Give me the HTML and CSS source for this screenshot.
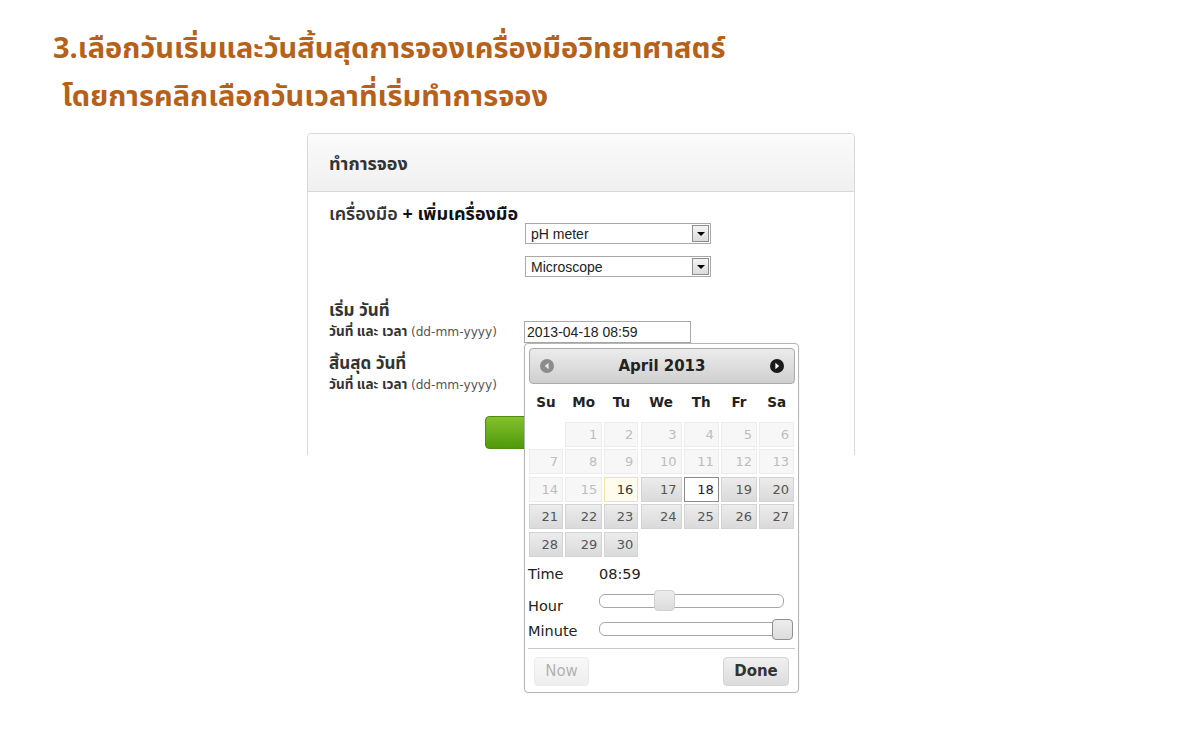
FILE: index.html
```html
<!DOCTYPE html>
<html lang="th">
<head>
<meta charset="utf-8">
<title>ทำการจอง</title>
<link rel="stylesheet" href="styles.css">
</head>
<body>
<div class="page">
  <h1 class="title">
    <span class="line">3.เลือกวันเริ่มและวันสิ้นสุดการจองเครื่องมือวิทยาศาสตร์</span>
    <span class="line line2">โดยการคลิกเลือกวันเวลาที่เริ่มทำการจอง</span>
  </h1>
  <div class="stage">
    <div class="panel-clip">
      <div class="panel">
        <div class="panel-head">ทำการจอง</div>
        <div class="panel-body">
          <div class="tools-title"><span class="tt-a">เครื่องมือ</span> <span class="tt-b">+ เพิ่มเครื่องมือ</span></div>
          <div class="selects">
            <div class="select"><span>pH meter</span><span class="arrow"></span></div>
            <div class="select"><span>Microscope</span><span class="arrow"></span></div>
          </div>
          <div class="date-title first">เริ่ม วันที่</div>
          <div class="date-row">
            <span class="date-label">วันที่ และ เวลา <span class="fmt">(dd-mm-yyyy)</span></span>
            <div class="input">2013-04-18 08:59</div>
          </div>
          <div class="date-title">สิ้นสุด วันที่</div>
          <div class="date-row">
            <span class="date-label">วันที่ และ เวลา <span class="fmt">(dd-mm-yyyy)</span></span>
            <div class="input"></div>
          </div>
          <div class="actions"><div class="btn-green"></div></div>
        </div>
      </div>
    </div>

    <div class="datepicker">
      <div class="dp-head">
        <svg class="dp-nav" width="14" height="14" viewBox="0 0 14 14"><circle cx="7" cy="7" r="7" fill="#8c8c8c"/><path d="M8.6 3.8 L4.8 7 L8.6 10.2 Z" fill="#e8e8e8"/></svg>
        <span class="dp-title">April 2013</span>
        <svg class="dp-nav" width="14" height="14" viewBox="0 0 14 14"><circle cx="7" cy="7" r="7" fill="#1a1a1a"/><path d="M5.4 3.8 L9.2 7 L5.4 10.2 Z" fill="#ffffff"/></svg>
      </div>
      <div class="dp-grid">
        <div class="wd">Su</div><div class="wd">Mo</div><div class="wd">Tu</div><div class="wd">We</div><div class="wd">Th</div><div class="wd">Fr</div><div class="wd">Sa</div>

        <div class="empty"></div><div class="d off">1</div><div class="d off">2</div><div class="d off">3</div><div class="d off">4</div><div class="d off">5</div><div class="d off">6</div>
        <div class="d off">7</div><div class="d off">8</div><div class="d off">9</div><div class="d off">10</div><div class="d off">11</div><div class="d off">12</div><div class="d off">13</div>
        <div class="d off">14</div><div class="d off">15</div><div class="d today">16</div><div class="d">17</div><div class="d active">18</div><div class="d">19</div><div class="d">20</div>
        <div class="d">21</div><div class="d">22</div><div class="d">23</div><div class="d">24</div><div class="d">25</div><div class="d">26</div><div class="d">27</div>
        <div class="d">28</div><div class="d">29</div><div class="d">30</div>
      </div>
      <div class="dp-time">
        <div class="t-row t-time"><span class="t-label">Time</span><span class="t-val">08:59</span></div>
        <div class="t-row t-hour"><span class="t-label">Hour</span><div class="slider"><span class="handle" style="left: 54px"></span></div></div>
        <div class="t-row t-min"><span class="t-label">Minute</span><div class="slider"><span class="handle dark" style="left: 172px"></span></div></div>
      </div>
      <div class="dp-buttons">
        <span class="btn btn-now">Now</span>
        <span class="btn btn-done">Done</span>
      </div>
    </div>
  </div>
</div>
</body>
</html>
```

FILE: styles.css
```css
* { box-sizing: border-box; }
html, body { margin: 0; padding: 0; background: #fff; }
body { font-family: Tahoma, "Noto Sans Thai", "Noto Sans", "DejaVu Sans", sans-serif; color: #333; }

.page { width: 1189px; height: 729px; position: relative; overflow: hidden; }

.title {
  margin: 0;
  padding: 25px 0 0 53px;
  font-size: 29px;
  font-weight: bold;
  line-height: 48px;
  color: #b5611a;
  font-family: "Noto Sans Thai", Tahoma, "Noto Sans", sans-serif;
}
.title .line { display: block; }
.title .line2 { padding-left: 9px; }

.stage {
  position: relative;
  margin: 12px 0 0 307px;
  width: 548px;
}

.panel-clip { height: 322px; overflow: hidden; }
.panel {
  border: 1px solid #d8d8d8;
  border-radius: 4px 4px 0 0;
  height: 400px;
}
.panel-head {
  height: 58px;
  padding: 4px 0 0 21px;
  display: flex;
  align-items: center;
  font-size: 18px;
  font-weight: bold;
  color: #333;
  background: linear-gradient(#fbfbfb, #f0f0f0);
  border-bottom: 1px solid #d8d8d8;
  border-radius: 4px 4px 0 0;
}
.panel-body { padding: 10px 21px 0; }

.tools-title { font-size: 18px; line-height: 25px; height: 21px; color: #222; white-space: nowrap; }
.tools-title .tt-a { font-weight: 600; color: #333; }
.tools-title .tt-b { font-weight: bold; color: #111; }

.selects { margin-left: 196px; display: flex; flex-direction: column; gap: 12px; }
.select {
  width: 186px;
  height: 21px;
  border: 1px solid #a9a9a9;
  display: flex;
  align-items: center;
  justify-content: space-between;
  padding-left: 5px;
  font-family: "Liberation Sans", Arial, sans-serif;
  font-size: 14px;
  color: #222;
  background: #fff;
}
.arrow {
  width: 17px;
  height: 17px;
  margin-right: 1px;
  border: 1px solid #8c8c8c;
  background: linear-gradient(#f4f4f4, #dcdcdc);
  position: relative;
}
.arrow::after {
  content: "";
  position: absolute;
  left: 4px;
  top: 6px;
  border-left: 4px solid transparent;
  border-right: 4px solid transparent;
  border-top: 4px solid #000;
}

.date-title { font-size: 17px; font-weight: bold; line-height: 23px; height: 20px; color: #333; margin-top: 10px; white-space: nowrap; }
.date-title.first { margin-top: 23px; }
.date-row { display: flex; align-items: center; height: 22px; margin-top: 1px; }
.date-label { width: 195px; font-size: 13.5px; font-weight: bold; color: #333; white-space: nowrap; line-height: 16px; }
.fmt { font-family: "DejaVu Sans", Verdana, sans-serif; font-weight: normal; font-size: 12.2px; color: #555; }
.input {
  width: 167px;
  height: 22px;
  border: 1px solid #a9a9a9;
  padding-left: 2px;
  font-family: "Liberation Sans", Arial, sans-serif;
  font-size: 14px;
  line-height: 20px;
  color: #222;
}

.actions { display: flex; justify-content: center; margin-top: 20px; }
.btn-green {
  width: 193px;
  height: 33px;
  border: 1px solid #4d8c13;
  border-radius: 4px;
  background: linear-gradient(#84c12c, #4f9a0c);
}

/* datepicker overlay */
.datepicker {
  position: absolute;
  left: 217px;
  top: 210px;
  width: 275px;
  height: 350px;
  background: #fff;
  border: 1px solid #b5b5b5;
  border-radius: 4px;
  padding: 4px 3px 3px 3px;
  font-family: "DejaVu Sans", Verdana, sans-serif;
  color: #222;
  box-shadow: 0 0 2px rgba(0,0,0,0.08);
}
.dp-head {
  height: 36px;
  margin-left: 1px;
  border: 1px solid #aaa;
  border-radius: 4px;
  background: linear-gradient(#ececec, #cfcfcf);
  display: flex;
  align-items: center;
  justify-content: space-between;
  padding: 0 10px;
}
.dp-title { font-weight: bold; font-size: 15px; color: #222; }
.dp-nav { display: block; }

.dp-grid {
  display: grid;
  grid-template-columns: 34px 37px 34px 41px 35px 36px 35px;
  grid-template-rows: 35px;
  grid-auto-rows: 25px;
  column-gap: 2.2px;
  row-gap: 2.6px;
  margin-left: 1px;
}
.wd {
  font-weight: bold;
  font-size: 13.5px;
  color: #222;
  display: flex;
  align-items: center;
  justify-content: center;
  padding-top: 1px;
}
.d {
  border: 1px solid #d3d3d3;
  background: linear-gradient(#ececec, #dadada);
  font-size: 13px;
  color: #555;
  text-align: right;
  padding-right: 4px;
  line-height: 23px;
}
.d.off { background: #f7f7f7; border-color: #ececec; color: #bdbdbd; }
.d.today { background: #fffcec; border-color: #f1e3a8; color: #363636; }
.d.active { background: #fff; border-color: #8a8a8a; color: #212121; }

.dp-time { margin-top: 4px; font-size: 14.5px; color: #222; }
.t-row { display: flex; align-items: center; }
.t-label { width: 71px; }
.t-time { height: 26px; }
.t-hour { height: 25px; margin-top: 7px; }
.t-min { height: 25px; }
.slider {
  position: relative;
  width: 185px;
  height: 14px;
  border: 1px solid #a6a6a6;
  border-radius: 6px;
  background: #fff;
}
.t-hour .slider { margin-top: -10px; }
.t-min .slider { margin-top: -4px; }
.handle {
  position: absolute;
  top: -5px;
  width: 21px;
  height: 21px;
  border: 1px solid #d0d0d0;
  border-radius: 4px;
  background: linear-gradient(#ededed, #dcdcdc);
}
.handle.dark { border-color: #8f8f8f; top: -4px; }

.dp-buttons {
  margin-top: 4px;
  border-top: 1px solid #c8c8c8;
  display: flex;
  justify-content: space-between;
  padding: 8px 6px 0 6px;
}
.btn {
  height: 29px;
  border: 1px solid #d3d3d3;
  border-radius: 4px;
  background: linear-gradient(#f0f0f0, #dcdcdc);
  display: flex;
  align-items: center;
  justify-content: center;
  font-size: 15px;
}
.btn-now { width: 55px; color: #555; opacity: 0.45; }
.btn-done { width: 66px; font-weight: bold; color: #333; }
```
